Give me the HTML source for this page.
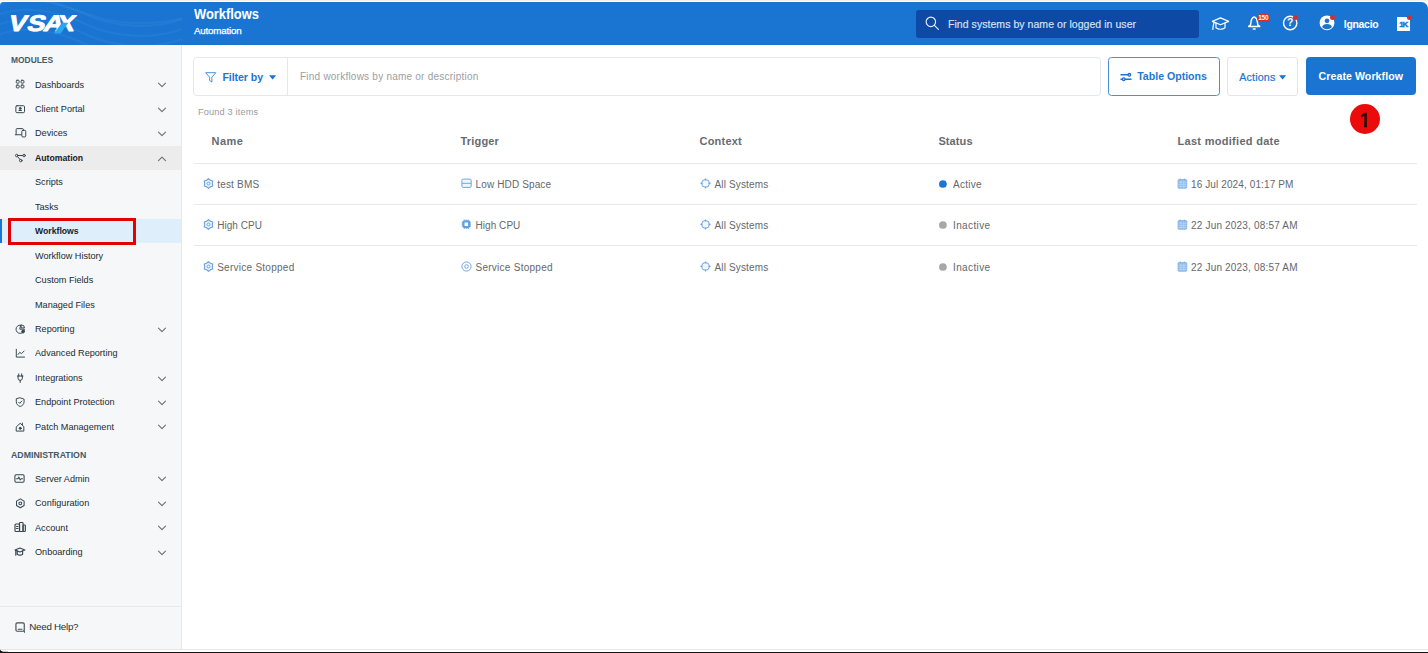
<!DOCTYPE html>
<html lang="en">
<head>
<meta charset="utf-8">
<title>Workflows</title>
<style>
*{box-sizing:border-box;margin:0;padding:0}
html,body{width:1428px;height:653px;overflow:hidden;background:#fff}
body{font-family:"Liberation Sans",sans-serif;color:#263238;position:relative}
.abs{position:absolute}
/* frame */
#frame-bottom{left:0;top:648.500px;width:1428px;height:4.500px;background:linear-gradient(#e6e6e9 0,#e6e6e9 1px,#fff 1px,#fff 3.100px,#161616 3.300px)}
#frame-top{left:0;top:0;width:1428px;height:0.800px;background:#f3f1e8}
/* header */
#header{left:0;top:2.300px;width:1428px;height:42.300px;background:#1a75d2;border-radius:3.500px 6.500px 0 0;overflow:hidden}
#logo{left:0;top:0;width:181px;height:43px}
#title{left:194px;top:3.500px;color:#fff;font-weight:bold;font-size:14.500px;line-height:17px;transform:scaleX(0.888);transform-origin:0 0;white-space:nowrap}
#subtitle{left:194px;top:22.700px;color:#fff;font-size:9.800px;line-height:11px;letter-spacing:-0.210px;-webkit-text-stroke:0.250px #fff;white-space:nowrap}
#gsearch{left:916px;top:8px;width:283px;height:28px;background:#0e49a6;border-radius:3px}
#gsearch span{position:absolute;left:32px;top:8px;font-size:10.500px;line-height:13px;color:#d9e4f5;white-space:nowrap;letter-spacing:0.050px;-webkit-text-stroke:0.150px #d9e4f5}
.rd{width:5px;height:5px;border-radius:50%;background:#d32f2f}
#uname{left:1343.800px;top:15.800px;color:#fff;font-size:10.400px;line-height:13px;font-weight:bold;letter-spacing:-0.260px;white-space:nowrap}
/* sidebar */
#sidebar{left:0;top:44.600px;width:181.800px;height:604px;background:#f5f7f9;border-right:1px solid #e6e8eb}
.sec{position:absolute;left:11px;font-size:9.300px;line-height:11px;color:#455a64;font-weight:bold;white-space:nowrap;transform-origin:0 0}
.it{position:absolute;left:0;width:181px;height:24.5px}
.it .lb{position:absolute;left:35px;top:6.400px;font-size:9.800px;line-height:12px;color:#222c33;white-space:nowrap;transform:scaleX(0.930);transform-origin:0 50%}

.it.bold .lb{font-weight:bold;-webkit-text-stroke:0;transform:scaleX(0.885);color:#17212a}
.it svg.ic{overflow:visible;position:absolute;left:14.700px;top:7.100px;width:10.400px;height:10.400px;stroke:#37474f;fill:none;stroke-width:1.150;stroke-linecap:round;stroke-linejoin:round}
.it svg.ch{position:absolute;left:157.200px;top:9px;width:10px;height:8px;stroke:#6b7074;fill:none;stroke-width:1.1;stroke-linecap:round;stroke-linejoin:round}
#it-auto{background:#ececed}
#it-wf{background:#deeefb}
#it-wf:before{content:"";position:absolute;left:0;top:0;width:2px;height:100%;background:#1976d2}
#redbox{left:8.200px;top:217.900px;width:127.600px;height:26.800px;border:3.700px solid #df0303}
#sidesep{left:0;top:605.500px;width:181px;height:1px;background:#e7ebee}
#help{left:29.300px;top:620.400px;font-size:9.800px;line-height:14px;color:#263238;white-space:nowrap;letter-spacing:-0.280px}
/* content */
#fbar{left:193px;top:57px;width:907.500px;height:39px;border:1px solid #e5e8ea;border-radius:4px;background:#fff}
#fsep{left:287px;top:58px;width:1px;height:37px;background:#e5e8ea}
#filterby{left:222.4px;top:70px;line-height:14px;color:#1976d2;white-space:nowrap;font-weight:bold}
#fph{left:300px;top:69.5px;line-height:13px;color:#9a9ea1;white-space:nowrap}
#btn-to{left:1107.800px;top:57px;width:112px;height:39px;border:1px solid #4a90d9;border-radius:3.500px;background:#fff}
#btn-to span{position:absolute;left:28.400px;top:10.600px;line-height:14px;color:#2179d3;white-space:nowrap;font-weight:bold}
#btn-ac{left:1227px;top:57px;width:71.300px;height:39px;border:1px solid #e3e6e9;border-radius:3px;background:#fff}
#btn-ac span{position:absolute;left:11.200px;top:11.500px;line-height:14px;color:#1976d2;white-space:nowrap;-webkit-text-stroke:0.200px #1976d2}
#btn-cw{left:1305.600px;top:57px;width:110.800px;height:38px;border-radius:4px;background:#1a75d2}
#btn-cw span{position:absolute;left:13px;top:11.5px;line-height:14px;color:#fff;white-space:nowrap;font-weight:bold}
#badge1{left:1350.300px;top:103.900px;width:30.100px;height:30px;border-radius:50%;background:#ec0b0b;color:#2a0303;font-size:19.400px;line-height:32.200px;text-align:center;-webkit-text-stroke:0.700px #2a0303;text-indent:-1.100px}
#badge1:before,#badge1:after{content:"";position:absolute;top:20.300px;height:4.200px;background:#ec0b0b}
#badge1:before{left:8.500px;width:5px}
#badge1:after{left:16.900px;width:5px}
#found{left:198px;top:106px;line-height:12px;color:#9a9c9e;white-space:nowrap}
.th{position:absolute;top:134px;line-height:14px;font-weight:bold;color:#676b6f;white-space:nowrap}
.hr{position:absolute;left:194px;width:1222.5px;height:1px;background:#e6e8ea}
.td{position:absolute;line-height:14px;color:#64686b;white-space:nowrap}
.ti{position:absolute;width:11px;height:11px;stroke:#6ba1dc;fill:none;stroke-width:0.950}
.dot{position:absolute;width:7.6px;height:7.6px;border-radius:50%}
</style>
</head>
<body>
<div id="frame-top" class="abs"></div>
<div id="header" class="abs">
<!--HEAD-->
<svg class="abs" style="left:0;top:0;width:182px;height:43px" viewBox="0 0 182 43">
  <g fill="none" stroke="#3d8de0" stroke-opacity="0.260" stroke-width="2.200">
    <path d="M-5 14c30-12 60-6 90 8s70 16 100 4"/>
    <path d="M-5 24c30-12 60-6 90 8s70 16 100 4"/>
    <path d="M-5 34c30-12 60-6 90 8s70 16 100 4"/>
    <path d="M-5 4c30-12 60-6 90 8s70 16 100 4"/>
    <path d="M40 -2c20 4 40 12 60 18s60 8 90 -2"/>
  </g>
  <text x="0 15.600 29.300 39.900" y="0" transform="translate(7.300 28.900) scale(1.200 1) skewX(-12)" font-family="'Liberation Sans',sans-serif" font-weight="bold" font-size="22.600" fill="#fff" stroke="#fff" stroke-width="0.800" stroke-linejoin="round">VSAX</text>
  <polygon points="54,31.400 60.700,31.400 68.300,20.800 62,20.800" fill="#2aa4f4"/>
</svg>
<div id="title" class="abs">Workflows</div>
<div id="subtitle" class="abs">Automation</div>
<div id="gsearch" class="abs"><svg class="abs" style="left:8.700px;top:6.100px;width:14.200px;height:14.200px" viewBox="0 0 15 15" fill="none" stroke="#e8f0fb" stroke-width="1.200" stroke-linecap="round"><circle cx="6.200" cy="6.200" r="5"/><path d="M9.900 9.900l4.300 4.300"/></svg><span>Find systems by name or logged in user</span></div>
<!-- graduation cap -->
<svg class="abs" style="left:1210.600px;top:14.600px;width:19px;height:13.600px" viewBox="0 0 20 15" fill="none" stroke="#fff" stroke-width="1.300" stroke-linejoin="round" stroke-linecap="round"><path d="M1 4.800l9-3.800 9 3.800-9 3.800z"/><path d="M5 6.800v5c1.500 1.200 3.200 1.700 5 1.700s3.500-.5 5-1.700v-5"/><path d="M3 5.800c-.8 2.500-1.300 5-1.500 8"/></svg>
<!-- bell -->
<svg class="abs" style="left:1246.600px;top:12.500px;width:14.400px;height:16px" viewBox="0 0 15 16" fill="none" stroke="#fff" stroke-width="1.500" stroke-linejoin="round" stroke-linecap="round"><path d="M7.500 1.600C5.600 2.400 4.400 4.300 4.200 6.800L3.600 10.200 1.700 11.600H13.300L11.400 10.200 10.800 6.800C10.600 4.300 9.400 2.400 7.500 1.600Z"/><path d="M6.600 14.200h1.800" stroke-width="1.700"/></svg>
<div class="abs" style="left:1256.600px;top:11.300px;width:13.400px;height:8px;border-radius:4px;background:#d32f2f;color:#fff;font-size:6.400px;line-height:8.200px;text-align:center;font-weight:bold;letter-spacing:-0.150px">150</div>
<!-- help -->
<svg class="abs" style="left:1282px;top:12.800px;width:16px;height:16px" viewBox="0 0 16 16" fill="none" stroke="#fff" stroke-width="1.400" stroke-linecap="round"><circle cx="8.200" cy="8" r="6.700"/></svg>
<div class="abs" style="left:1286.200px;top:15px;width:8px;color:#fff;font-size:10.300px;line-height:12px;font-weight:bold;text-align:center">?</div>
<div class="abs rd" style="left:1293.300px;top:12.400px"></div>
<!-- user -->
<svg class="abs" style="left:1319px;top:12.700px;width:16px;height:16px" viewBox="0 0 16 16"><circle cx="8" cy="7.800" r="7.400" fill="#fff"/><circle cx="8" cy="5.800" r="2.400" fill="#1b76d2"/><path d="M3.200 12.200c0-2.300 2.400-3.300 4.800-3.300s4.800 1 4.800 3.300c-1.300 1.300-2.900 2-4.800 2s-3.500-.7-4.800-2z" fill="#1b76d2"/></svg>
<div class="abs rd" style="left:1330px;top:12.900px"></div>
<div id="uname" class="abs">Ignacio</div>
<!-- 1K logo -->
<div class="abs" style="left:1396.700px;top:14.600px;width:13.800px;height:14.200px;background:#fff;color:#1b76d2;font-size:8px;line-height:16.200px;font-weight:bold;text-align:center;letter-spacing:-1.100px;text-indent:-0.800px;-webkit-text-stroke:0.400px #1b76d2">1K</div>
<div class="abs rd" style="left:1407.100px;top:13.200px"></div>

<!--/HEAD-->
</div>
<div id="sidebar" class="abs"></div>
<!--SIDE-->
<div class="sec" style="top:55.200px;transform:scaleX(0.905)">MODULES</div>
<div class="sec" style="top:449.800px;transform:scaleX(0.942)">ADMINISTRATION</div>
<div class="it " style="top:72.15px"><svg class="ic" viewBox="0 0 12 12" style="width:10.19px;height:10.19px;left:14.80px;top:7.20px"><rect x="1.5" y="1.5" width="3.4" height="3.4" rx="1"/><rect x="7.1" y="1.5" width="3.4" height="3.4" rx="1"/><rect x="1.5" y="7.1" width="3.4" height="3.4" rx="1"/><rect x="7.1" y="7.1" width="3.4" height="3.4" rx="1"/></svg><span class="lb">Dashboards</span><svg class="ch" viewBox="0 0 10 8"><path d="M1.500 2.200l3.500 3.500 3.500-3.500"/></svg></div>
<div class="it " style="top:96.6px"><svg class="ic" viewBox="0 0 12 12"><rect x="1" y="2" width="10" height="8" rx="1.2"/><circle cx="6" cy="5" r="1" fill="#37474f"/><path d="M4 8c0-1.2 0.9-1.7 2-1.7s2 0.5 2 1.7z" fill="#37474f" stroke="none"/></svg><span class="lb">Client Portal</span><svg class="ch" viewBox="0 0 10 8"><path d="M1.500 2.200l3.500 3.500 3.500-3.500"/></svg></div>
<div class="it " style="top:121.05px"><svg class="ic" viewBox="0 0 12 12"><path d="M1.300 7.300V1.700c0-.6.400-1 1-1h6.400c.6 0 1 .4 1 1v.8M0.300 7.800h7"/><rect x="7.900" y="2.700" width="4.500" height="7.600" rx="1.100"/></svg><span class="lb">Devices</span><svg class="ch" viewBox="0 0 10 8"><path d="M1.500 2.200l3.500 3.500 3.500-3.500"/></svg></div>
<div class="it bold" id="it-auto" style="top:145.5px"><svg class="ic" viewBox="0 0 12 12"><circle cx="2" cy="2.900" r="1.450"/><circle cx="10.500" cy="2.900" r="1.450"/><circle cx="6.700" cy="8.800" r="1.450"/><path d="M3.500 2.900h5.500M2.900 4.100l2.900 3.500"/></svg><span class="lb">Automation</span><svg class="ch" viewBox="0 0 10 8"><path d="M1.500 5.700l3.500-3.500 3.500 3.500"/></svg></div>
<div class="it sub" style="top:169.95px"><span class="lb">Scripts</span></div>
<div class="it sub" style="top:194.4px"><span class="lb">Tasks</span></div>
<div class="it sub bold" id="it-wf" style="top:218.85px"><span class="lb">Workflows</span></div>
<div class="it sub" style="top:243.3px"><span class="lb">Workflow History</span></div>
<div class="it sub" style="top:267.75px"><span class="lb">Custom Fields</span></div>
<div class="it sub" style="top:292.2px"><span class="lb">Managed Files</span></div>
<div class="it " style="top:316.65px"><svg class="ic" viewBox="0 0 12 12"><path d="M6 1.200a4.800 4.800 0 1 0 4.800 4.800H6z"/><path d="M7.500 1a3.500 3.500 0 0 1 3.500 3.500H7.500z"/><circle cx="9.300" cy="8.800" r="1.600" fill="#37474f"/></svg><span class="lb">Reporting</span><svg class="ch" viewBox="0 0 10 8"><path d="M1.500 2.200l3.500 3.500 3.500-3.500"/></svg></div>
<div class="it " style="top:341.1px"><svg class="ic" viewBox="0 0 12 12"><path d="M1.500 1.500v9h9.500"/><path d="M3.500 7.500l2-2.500 2 1.500 3-3"/></svg><span class="lb">Advanced Reporting</span></div>
<div class="it " style="top:365.55px"><svg class="ic" viewBox="0 0 12 12"><path d="M4.300 1v2.500M7.700 1v2.500M2.800 3.500h6.400M3.500 3.500v2.500a2.500 2.500 0 0 0 5 0v-2.500M6 8.500v2.500"/></svg><span class="lb">Integrations</span><svg class="ch" viewBox="0 0 10 8"><path d="M1.500 2.200l3.500 3.500 3.500-3.500"/></svg></div>
<div class="it " style="top:390px"><svg class="ic" viewBox="0 0 12 12"><path d="M6 1l4.500 1.500v3c0 2.800-2 4.600-4.500 5.500-2.500-.9-4.500-2.700-4.500-5.500v-3z"/><path d="M4.200 6l1.300 1.300 2.400-2.600"/></svg><span class="lb">Endpoint Protection</span><svg class="ch" viewBox="0 0 10 8"><path d="M1.500 2.200l3.500 3.500 3.500-3.500"/></svg></div>
<div class="it " style="top:414.45px"><svg class="ic" viewBox="0 0 12 12"><path d="M1.800 5.300l4.200-3.800 4.200 3.800v5.200h-8.400z"/><circle cx="6" cy="7.300" r="1.200" fill="#37474f"/><path d="M8.500 1.200v1.800"/></svg><span class="lb">Patch Management</span><svg class="ch" viewBox="0 0 10 8"><path d="M1.500 2.200l3.500 3.500 3.500-3.500"/></svg></div>
<div class="it " style="top:466.25px"><svg class="ic" viewBox="0 0 12 12" style="width:11.02px;height:11.02px;left:14.39px;top:6.79px"><rect x="1" y="2" width="10" height="8" rx="1.200"/><path d="M2.800 6.300h1.500l1-1.800 1.400 3 1-1.200h1.600"/></svg><span class="lb">Server Admin</span><svg class="ch" viewBox="0 0 10 8"><path d="M1.500 2.200l3.500 3.500 3.500-3.500"/></svg></div>
<div class="it " style="top:490.7px"><svg class="ic" viewBox="0 0 12 12" style="width:10.61px;height:10.61px;left:14.60px;top:7.00px"><path d="M6 1l4.300 2.500v5l-4.300 2.500-4.300-2.500v-5z"/><circle cx="6" cy="6" r="1.600"/></svg><span class="lb">Configuration</span><svg class="ch" viewBox="0 0 10 8"><path d="M1.500 2.200l3.500 3.500 3.500-3.500"/></svg></div>
<div class="it " style="top:515.15px"><svg class="ic" viewBox="0 0 12 12" style="width:12.06px;height:12.06px;left:13.87px;top:6.27px"><rect x="1" y="3" width="4.500" height="7.500" rx="1"/><rect x="5.500" y="1.500" width="3.500" height="9" rx="0.800"/><rect x="9" y="4" width="2.300" height="6.500" rx="0.800"/><path d="M2.500 5.500h1.500M2.500 7.500h1.500"/></svg><span class="lb">Account</span><svg class="ch" viewBox="0 0 10 8"><path d="M1.500 2.200l3.500 3.500 3.500-3.500"/></svg></div>
<div class="it " style="top:539.6px"><svg class="ic" viewBox="0 0 12 12" style="width:11.86px;height:11.86px;left:13.97px;top:6.37px"><path d="M1 4l5-2 5 2-5 2z"/><path d="M3.300 5v3.300c.8.700 1.700 1 2.700 1s1.900-.3 2.700-1v-3.300M1.800 4.500v4.800"/></svg><span class="lb">Onboarding</span><svg class="ch" viewBox="0 0 10 8"><path d="M1.500 2.200l3.500 3.500 3.500-3.500"/></svg></div>
<!--/SIDE-->
<div id="redbox" class="abs"></div>
<div id="sidesep" class="abs"></div>
<svg class="abs" style="left:14.800px;top:621.700px;width:10.200px;height:11.100px" viewBox="0 0 11 12" fill="none" stroke="#474d53" stroke-width="1.250" stroke-linejoin="round" stroke-linecap="round"><path d="M2.300 1h6.400q1.300 0 1.300 1.300v6.400q0 1.300-1.300 1.300h-6.400q-1.300 0-1.300-1.300v-6.400q0-1.300 1.300-1.300z"/><path d="M3.500 7.800h4M9.800 9.800l.6 1.300"/></svg>
<div id="help" class="abs">Need Help?</div>
<!--CONTENT-->
<div id="fbar" class="abs"></div><div id="fsep" class="abs"></div>
<svg class="abs" style="left:205px;top:71.500px;width:11.500px;height:11px" viewBox="0 0 11.500 11" fill="none" stroke="#3d8bdc" stroke-width="0.950" stroke-linejoin="round"><path d="M0.700 0.700h10.100l-3.900 4.600v4.700l-2.300-1.500v-3.200z"/></svg>
<div id="filterby" class="abs" style="font-size:10.6px;letter-spacing:-0.069px">Filter by</div>
<svg class="abs" style="left:269.200px;top:75.300px;width:7.200px;height:4.600px" viewBox="0 0 8 5"><path d="M0.200 0.500q0-.3.400-.3h6.800q.4 0 .4.300l-3.500 4.200q-.3.300-.6 0z" fill="#1976d2"/></svg>
<div id="fph" class="abs" style="font-size:10px;letter-spacing:0.230px">Find workflows by name or description</div>
<div id="btn-to" class="abs"><svg class="abs" style="left:11px;top:13px;width:12px;height:12px" viewBox="0 0 12 12" fill="none" stroke="#1976d2" stroke-width="1.400" stroke-linecap="round"><path d="M1 3.800h6.500M1 8.200h1M5.500 8.200h5.500"/><circle cx="9.300" cy="3.800" r="1.300"/><circle cx="3.700" cy="8.200" r="1.300"/></svg><span style="font-size:10.6px;letter-spacing:-0.011px">Table Options</span></div>
<div id="btn-ac" class="abs"><span style="font-size:10.7px;letter-spacing:0.177px">Actions</span><svg class="abs" style="left:50.800px;top:17.300px;width:7.200px;height:4.600px" viewBox="0 0 8 5"><path d="M0.200 0.500q0-.3.400-.3h6.800q.4 0 .4.300l-3.500 4.200q-.3.300-.6 0z" fill="#1976d2"/></svg></div>
<div id="btn-cw" class="abs"><span style="font-size:10.6px;letter-spacing:0.066px">Create Workflow</span></div>
<div id="badge1" class="abs">1</div>
<div id="found" class="abs" style="font-size:9.2px;letter-spacing:0.152px">Found 3 items</div>
<div class="th" style="left:211.5px;font-size:11px;letter-spacing:0.433px">Name</div>
<div class="th" style="left:460.6px;font-size:11px;letter-spacing:0.158px">Trigger</div>
<div class="th" style="left:699.5px;font-size:11px;letter-spacing:0.221px">Context</div>
<div class="th" style="left:938.4px;font-size:11px;letter-spacing:0.112px">Status</div>
<div class="th" style="left:1177.5px;font-size:11px;letter-spacing:0.295px">Last modified date</div>
<div class="hr" style="top:163px"></div>
<div class="hr" style="top:204px"></div>
<div class="hr" style="top:245px"></div>
<svg class="ti" style="left:203px;top:177.9px" viewBox="0 0 11 11"><polygon points="5.50,0.60 7.38,2.25 9.74,3.05 9.25,5.50 9.74,7.95 7.38,8.75 5.50,10.40 3.63,8.75 1.26,7.95 1.75,5.50 1.26,3.05 3.62,2.25" fill="#eaf5ff" stroke-linejoin="round" stroke-width="1.150"/><circle cx="5.500" cy="5.500" r="1.450"/></svg><div class="td" style="left:217.200px;top:178px;font-size:10px;letter-spacing:0.190px">test BMS</div>
<svg class="ti" style="left:460.5px;top:177.9px" viewBox="0 0 11 11"><rect x="0.900" y="1.100" width="9.300" height="8.300" rx="1.300" fill="#eef7ff"/><path d="M0.900 5.300h9.300"/></svg><div class="td" style="left:475.500px;top:178px;font-size:10px;letter-spacing:0.137px">Low HDD Space</div>
<svg class="ti" style="left:699.5px;top:177.9px" viewBox="0 0 11 11"><circle cx="5.500" cy="5.400" r="3.900" fill="#f1f8ff"/><path d="M5.500 0.400v2M5.500 8.400v2M0.500 5.400h2M8.500 5.400h2" stroke-width="1.100"/></svg><div class="td" style="left:714.500px;top:178px;font-size:10px;letter-spacing:0.151px">All Systems</div>
<svg class="abs" style="left:938px;top:178.9px;width:10px;height:10px" viewBox="0 0 10 10"><circle cx="4.900" cy="5" r="3.850" fill="#1976d2"/></svg><div class="td" style="left:953px;top:178px;font-size:10px;letter-spacing:0.261px">Active</div>
<svg class="ti" style="left:1177px;top:177.9px" viewBox="0 0 11 11"><path d="M3.300 0.700v1.500M7.400 0.700v1.500" stroke="#5a8fce" stroke-width="1.100"/><rect x="1" y="1.500" width="8.800" height="8.800" rx="1" fill="#8fbcec" stroke="#7eade2" stroke-width="0.700"/><path d="M1.200 4.200h8.400M1.200 6.300h8.400M1.200 8.400h8.400M3.900 2.600v7.500M6.800 2.600v7.500" stroke="#c5defa" stroke-width="0.600"/></svg><div class="td" style="left:1191px;top:178px;font-size:10px;letter-spacing:0.115px">16 Jul 2024, 01:17 PM</div>
<svg class="ti" style="left:203px;top:219.3px" viewBox="0 0 11 11"><polygon points="5.50,0.60 7.38,2.25 9.74,3.05 9.25,5.50 9.74,7.95 7.38,8.75 5.50,10.40 3.63,8.75 1.26,7.95 1.75,5.50 1.26,3.05 3.62,2.25" fill="#eaf5ff" stroke-linejoin="round" stroke-width="1.150"/><circle cx="5.500" cy="5.500" r="1.450"/></svg><div class="td" style="left:217.200px;top:219px;font-size:10px;letter-spacing:0.054px">High CPU</div>
<svg class="ti" style="left:460.5px;top:219.3px" viewBox="0 0 11 11"><rect x="2.400" y="2.300" width="5.800" height="5.800" rx="1.300" stroke-width="2.300" stroke="#5fa2e3"/><path d="M3.300 0.600v1M5.300 0.600v1M7.300 0.600v1M3.300 8.800v1M5.300 8.800v1M7.300 8.800v1M0.700 3.200h1M0.700 5.200h1M0.700 7.200h1M8.900 3.200h1M8.900 5.200h1M8.900 7.200h1" stroke-width="1" stroke="#5fa2e3"/></svg><div class="td" style="left:475.500px;top:219px;font-size:10px;letter-spacing:0.054px">High CPU</div>
<svg class="ti" style="left:699.5px;top:219.3px" viewBox="0 0 11 11"><circle cx="5.500" cy="5.400" r="3.900" fill="#f1f8ff"/><path d="M5.500 0.400v2M5.500 8.400v2M0.500 5.400h2M8.500 5.400h2" stroke-width="1.100"/></svg><div class="td" style="left:714.500px;top:219px;font-size:10px;letter-spacing:0.151px">All Systems</div>
<svg class="abs" style="left:938px;top:220.3px;width:10px;height:10px" viewBox="0 0 10 10"><circle cx="4.900" cy="5" r="3.850" fill="#a7a7a7"/></svg><div class="td" style="left:953px;top:219px;font-size:10px;letter-spacing:0.379px">Inactive</div>
<svg class="ti" style="left:1177px;top:219.3px" viewBox="0 0 11 11"><path d="M3.300 0.700v1.500M7.400 0.700v1.500" stroke="#5a8fce" stroke-width="1.100"/><rect x="1" y="1.500" width="8.800" height="8.800" rx="1" fill="#8fbcec" stroke="#7eade2" stroke-width="0.700"/><path d="M1.200 4.200h8.400M1.200 6.300h8.400M1.200 8.400h8.400M3.900 2.600v7.500M6.800 2.600v7.500" stroke="#c5defa" stroke-width="0.600"/></svg><div class="td" style="left:1191px;top:219px;font-size:10px;letter-spacing:0.183px">22 Jun 2023, 08:57 AM</div>
<svg class="ti" style="left:203px;top:261.1px" viewBox="0 0 11 11"><polygon points="5.50,0.60 7.38,2.25 9.74,3.05 9.25,5.50 9.74,7.95 7.38,8.75 5.50,10.40 3.63,8.75 1.26,7.95 1.75,5.50 1.26,3.05 3.62,2.25" fill="#eaf5ff" stroke-linejoin="round" stroke-width="1.150"/><circle cx="5.500" cy="5.500" r="1.450"/></svg><div class="td" style="left:217.200px;top:261px;font-size:10px;letter-spacing:0.261px">Service Stopped</div>
<svg class="ti" style="left:460.5px;top:261.1px" viewBox="0 0 11 11"><circle cx="5.500" cy="5.500" r="4.600"/><circle cx="5.500" cy="5.500" r="1.800"/></svg><div class="td" style="left:475.500px;top:261px;font-size:10px;letter-spacing:0.261px">Service Stopped</div>
<svg class="ti" style="left:699.5px;top:261.1px" viewBox="0 0 11 11"><circle cx="5.500" cy="5.400" r="3.900" fill="#f1f8ff"/><path d="M5.500 0.400v2M5.500 8.400v2M0.500 5.400h2M8.500 5.400h2" stroke-width="1.100"/></svg><div class="td" style="left:714.500px;top:261px;font-size:10px;letter-spacing:0.151px">All Systems</div>
<svg class="abs" style="left:938px;top:262.1px;width:10px;height:10px" viewBox="0 0 10 10"><circle cx="4.900" cy="5" r="3.850" fill="#a7a7a7"/></svg><div class="td" style="left:953px;top:261px;font-size:10px;letter-spacing:0.379px">Inactive</div>
<svg class="ti" style="left:1177px;top:261.1px" viewBox="0 0 11 11"><path d="M3.300 0.700v1.500M7.400 0.700v1.500" stroke="#5a8fce" stroke-width="1.100"/><rect x="1" y="1.500" width="8.800" height="8.800" rx="1" fill="#8fbcec" stroke="#7eade2" stroke-width="0.700"/><path d="M1.200 4.200h8.400M1.200 6.300h8.400M1.200 8.400h8.400M3.900 2.600v7.500M6.800 2.600v7.500" stroke="#c5defa" stroke-width="0.600"/></svg><div class="td" style="left:1191px;top:261px;font-size:10px;letter-spacing:0.183px">22 Jun 2023, 08:57 AM</div>
<!--/CONTENT-->
<div id="frame-bottom" class="abs"></div>
<svg class="abs" style="left:0;top:645px;width:8px;height:8px" viewBox="0 0 8 8"><path d="M0 4.600V8H8V6.700H3.200Q0.800 6.600 0 4.600Z" fill="#161616"/></svg>
</body>
</html>
